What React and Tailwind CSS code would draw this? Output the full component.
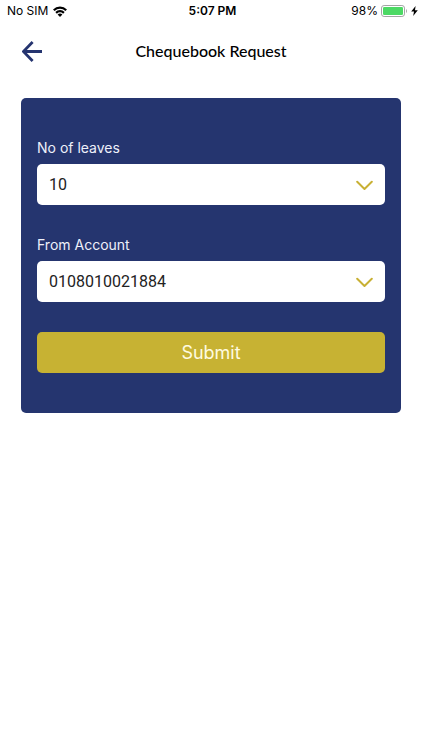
import { useState } from 'react'

const LEAVES = ['10', '25', '50']
const ACCOUNTS = ['0108010021884']

const StatusBar = () => (
  <div className="grid grid-cols-3 items-center h-[22px] pl-[7px] pr-1 text-black text-xs">
    <div className="flex items-center gap-[5px]">
      <span>No SIM</span>
      <svg className="w-[14px] h-[11px]" viewBox="0 0 14 11" fill="none" stroke="currentColor" strokeWidth="2.2">
        <path d="M0.8 4.3C4.3 0.6 9.7 0.6 13.2 4.3" />
        <path d="M3.1 6.9C5.4 4.6 8.6 4.6 10.9 6.9" />
        <path d="M7 11L4.6 8.5C6 7.3 8 7.3 9.4 8.5Z" fill="currentColor" stroke="none" />
      </svg>
    </div>
    <span className="text-center font-semibold">5:07 PM</span>
    <div className="flex items-center justify-end gap-[3px]">
      <span>98%</span>
      <svg className="w-[27px] h-[12px]" viewBox="0 0 27 12">
        <rect x="0.5" y="0.5" width="23" height="11" rx="2.6" fill="none" stroke="#a3a5a4" />
        <rect x="2" y="2" width="20" height="8" rx="1.3" fill="#4cd964" />
        <path d="M25 4C26.3 4.5 26.3 7.5 25 8Z" fill="#a3a5a4" />
      </svg>
      <svg className="w-[7px] h-[10px]" viewBox="0 0 7 10" fill="currentColor">
        <path d="M4.6 0L0.2 5.6H3L2.2 10L6.8 4.2H4Z" />
      </svg>
    </div>
  </div>
)

const SelectField = ({ id, label, options, value, onChange }) => (
  <div>
    <label htmlFor={id} className="block mb-[6px] text-sm leading-5 text-[#eef0fa]">
      {label}
    </label>
    <div className="relative">
      <select
        id={id}
        value={value}
        onChange={(e) => onChange(e.target.value)}
        className="block w-full h-[41px] appearance-none rounded-[5px] bg-white pl-3 pr-10 font-['Roboto',sans-serif] text-base text-[#222222]"
      >
        {options.map((option) => (
          <option key={option} value={option}>{option}</option>
        ))}
      </select>
      <svg
        className="absolute right-3 top-4 w-[17px] h-[11px] pointer-events-none"
        viewBox="0 0 17 11"
        fill="none"
        stroke="#c8b034"
        strokeWidth="2"
        strokeLinecap="round"
        strokeLinejoin="round"
      >
        <path d="M1.2 1.8L8.5 9L15.8 1.8" />
      </svg>
    </div>
  </div>
)

const App = () => {
  const [leaves, setLeaves] = useState(LEAVES[0])
  const [account, setAccount] = useState(ACCOUNTS[0])

  return (
    <div className="min-h-screen bg-white font-['Inter',sans-serif]">
      <StatusBar />

      {/* Header */}
      <header className="grid grid-cols-[40px_1fr_40px] items-center h-[58px] px-3">
        <button type="button" aria-label="Back" className="flex h-10 items-center justify-center text-[#25346f]">
          <svg className="w-[21px] h-[21px]" viewBox="0 0 21 21" fill="none" stroke="currentColor" strokeWidth="2.8">
            <path d="M10.6 1L1.4 10.5L10.6 20M1.4 10.5H20" />
          </svg>
        </button>
        <h1 className="text-center font-['Lato',sans-serif] font-medium text-base leading-5 text-black">Chequebook Request</h1>
      </header>

      {/* Request form */}
      <main className="px-[21px] pt-[18px]">
        <form
          onSubmit={(e) => e.preventDefault()}
          className="flex flex-col gap-[30px] rounded-[5px] bg-[#25356f] px-4 py-10"
        >
          <SelectField id="leaves" label="No of leaves" options={LEAVES} value={leaves} onChange={setLeaves} />
          <SelectField id="account" label="From Account" options={ACCOUNTS} value={account} onChange={setAccount} />
          <button type="submit" className="h-[41px] rounded-[5px] bg-[#c7b233] text-lg text-[#fffbe0]">
            Submit
          </button>
        </form>
      </main>
    </div>
  )
}

export default App
